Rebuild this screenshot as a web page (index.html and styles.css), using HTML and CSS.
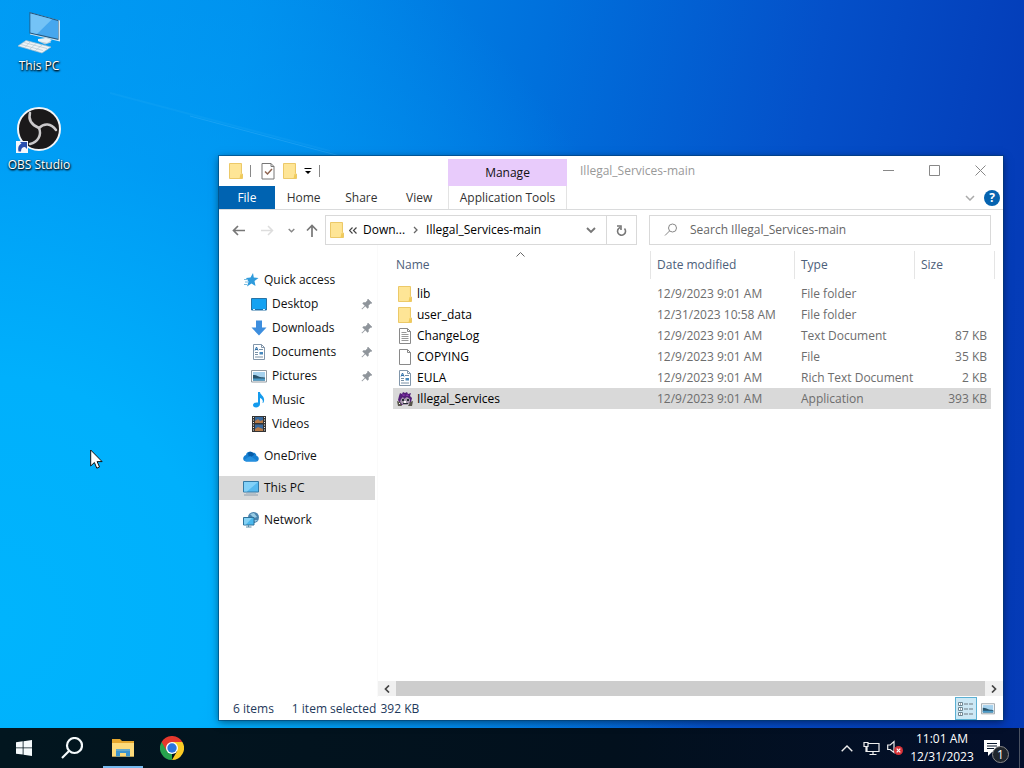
FILE: index.html
```html
<!DOCTYPE html>
<html lang="en">
<head>
<meta charset="utf-8">
<title>Illegal_Services-main</title>
<link rel="stylesheet" href="styles.css">
</head>
<body>
<svg class="defs" aria-hidden="true">
  <symbol id="folder" viewBox="0 0 14 16"><path d="M.5.500h12v10l1 .5v4.500H.500z" fill="#fde28a" stroke="#ecc968"/><path d="M1 1h10.500v14H1z" fill="#fee596"/><path d="M11.500 11l1.500.5v4h-2.500z" fill="#f0cb5a"/></symbol>
  <symbol id="pin" viewBox="0 0 12 12"><path d="M7 1l4 4-1 .6-.6-.1-2 2 .1 2-.9.9L4.300 8 1 11.200.800 11 4 7.700 1.600 5.400l.9-.9 2 .1 2-2-.1-.6z" fill="#8f959b" stroke="#8f959b" stroke-width=".5"/></symbol>
  <symbol id="doc" viewBox="0 0 14 16"><path d="M1.500.5h8l3 3v12h-11z" fill="#fff" stroke="#8296aa"/><path d="M9.500.5v3h3" fill="none" stroke="#8296aa"/><path d="M3 6.500l1.500-3.500L6 6.500M3.500 5.500h2" fill="none" stroke="#2c6ea8"/><path d="M7 5.500h4M3 8.500h3M3 10.500h3M3 13h8" stroke="#7890a5"/><path d="M7.500 8h3.500v2.500H7.500z" fill="#4788bd"/></symbol>
  <symbol id="picture" viewBox="0 0 16 13"><path d="M.5.500h15v11.500H.500z" fill="#fff" stroke="#929ba2"/><path d="M2 2h12v8.500H2z" fill="#a6d2ee"/><path d="M2 5c4 0 5 1.500 7 2 2 .5 4 .3 5 .6v2.900H2z" fill="#28536b"/><path d="M2 8.500h12v2H2z" fill="#4b9bc8"/></symbol>
  <symbol id="pc" viewBox="0 0 16 15"><path d="M.5.500h15v10.500H.5z" fill="#56b9ef" stroke="#3479a5"/><path d="M1 1h14L4 10.500H1z" fill="#83d1f8"/><path d="M1 14h14" stroke="#8c9cab"/><path d="M3 12.500h10" stroke="#b5c1ca"/></symbol>
</svg>

<main class="desktop">
  <svg class="rays" viewBox="0 0 400 160" aria-hidden="true"><path d="M190 116l150 40" stroke="#71ceff" stroke-opacity=".2"/><path d="M110 93l220 58" stroke="#71ceff" stroke-opacity=".07" stroke-width="2"/></svg>
  <nav class="shortcuts" aria-label="Desktop">
    <a href="#" class="shortcut">
      <svg width="46" height="44" viewBox="0 0 46 44"><path d="M14 2.500l30 8v21l-30-7z" fill="#d3e8f4"/><path d="M13.500 2l29 8v20l-29-6.500z" fill="#27597f"/><path d="M14.500 3.500l27.500 7.500v17.700l-27.500-6.200z" fill="#46a7ee"/><path d="M14.500 3.500L36 9.300 21 24l-6.500-1.500z" fill="#74c3f6"/><path d="M28 27l1 3-7 1 7 3.500 6-2-1-4z" fill="#b5cbd8"/><path d="M22 29l8-1 6 2-5 3-9-2z" fill="#eaf2f6"/><path d="M10 30.500l25 6.500-9 6-24-7z" fill="#eef3f6" stroke="#a4bdcd" stroke-width=".7"/><path d="M8 32.500l23 6M5 34.500l22 6M14 32l-5 5.500M20 33.500l-6 5.500M26 35l-7 6" stroke="#b4c7d3" stroke-width=".7"/></svg>
      <span>This PC</span>
    </a>
    <a href="#" class="shortcut">
      <svg width="46" height="48" viewBox="0 0 46 48"><circle cx="23" cy="23" r="21" fill="#1b191a" stroke="#f2f5f8" stroke-width="2"/><g fill="none" stroke="#cbc9cb" stroke-linecap="round"><path d="M23 22C16 19 12 14 14 7" stroke-width="2.500"/><path d="M23 22c5-5 12-5 17 2" stroke-width="2.500"/><path d="M23 22c3 7-1 14-9 16" stroke-width="2.500"/></g><path d="M0 35h12v12H0z" fill="#f5f8fc"/><path d="M2.500 45.500c-1-5 1-7 3-8L4 36h7v7l-2-2c-3 0-4 2-4 4.500z" fill="#2a4fae"/></svg>
      <span>OBS Studio</span>
    </a>
  </nav>

  <section class="window" aria-label="Illegal_Services-main">
    <header class="titlebar">
      <div class="quick">
        <svg width="14" height="16"><use href="#folder"/></svg><i class="bar"></i>
        <button aria-label="Properties" class="props"><svg width="14" height="17" viewBox="0 0 14 17"><path d="M1 .500h9l3 3v12.500H1z" fill="#fff" stroke="#777"/><path d="M10 .5v3h3" fill="none" stroke="#777"/><path d="M4 8.500l2.500 2.500L11 6" fill="none" stroke="#8e6450" stroke-width="1.500"/></svg></button>
        <button aria-label="New folder"><svg width="14" height="16"><use href="#folder"/></svg></button>
        <button aria-label="Customize toolbar"><svg width="8" height="8" viewBox="0 0 8 8"><path d="M.5 1.500h7" stroke="#000"/><path d="M1 4h6L4 7z"/></svg></button><i class="bar"></i>
      </div>
      <div class="manage">Manage</div>
      <h1>Illegal_Services-main</h1>
      <div class="controls">
        <button aria-label="Minimize"><svg width="11" height="11" viewBox="0 0 11 11"><path d="M0 5.500h11" stroke="#888"/></svg></button>
        <button aria-label="Maximize"><svg width="11" height="11" viewBox="0 0 11 11"><path d="M.5.500h10v10H.500z" fill="none" stroke="#888"/></svg></button>
        <button aria-label="Close"><svg width="11" height="11" viewBox="0 0 11 11"><path d="M.5.500l10 10M10.500.500l-10 10" stroke="#888"/></svg></button>
      </div>
    </header>

    <div class="ribbon">
      <div class="tabs"><button class="file">File</button><button>Home</button><button>Share</button><button>View</button></div>
      <button class="context">Application Tools</button>
      <div class="ribbon-end">
        <button aria-label="Expand ribbon"><svg width="10" height="6" viewBox="0 0 10 6"><path d="M1 1l4 4 4-4" fill="none" stroke="#aaa" stroke-width="1.500"/></svg></button>
        <button class="help" aria-label="Help">?</button>
      </div>
    </div>

    <div class="location">
      <div class="history">
        <button class="back" aria-label="Back"><svg width="13" height="11" viewBox="0 0 13 11"><path d="M13 5.500H1.500M6 1L1.500 5.500 6 10" fill="none" stroke="#777" stroke-width="1.700"/></svg></button>
        <button aria-label="Forward"><svg width="13" height="11" viewBox="0 0 13 11"><path d="M0 5.500h11.500M7 1l4.500 4.500L7 10" fill="none" stroke="#ddd" stroke-width="1.500"/></svg></button>
        <button aria-label="Recent locations"><svg width="7" height="5" viewBox="0 0 7 5"><path d="M.7 1l2.800 2.800L6.300 1" fill="none" stroke="#888" stroke-width="1.400"/></svg></button>
        <button class="up" aria-label="Up"><svg width="12" height="13" viewBox="0 0 12 13"><path d="M6 13V1.500M1 6.500l5-5 5 5" fill="none" stroke="#777" stroke-width="1.700"/></svg></button>
      </div>
      <div class="address">
        <svg width="14" height="16"><use href="#folder"/></svg>
        <svg class="more" width="8" height="7" viewBox="0 0 8 7"><path d="M3.500.500l-3 3 3 3M7.500.500l-3 3 3 3" fill="none" stroke="#444" stroke-width="1.200"/></svg>
        <button>Down...</button>
        <svg width="5" height="8" viewBox="0 0 5 8"><path d="M1 1l3 3-3 3" fill="none" stroke="#666" stroke-width="1.300"/></svg>
        <button>Illegal_Services-main</button>
        <button class="drop" aria-label="Previous locations"><svg width="10" height="7" viewBox="0 0 10 7"><path d="M1 1l4 4 4-4" fill="none" stroke="#777" stroke-width="1.900"/></svg></button>
        <button class="refresh" aria-label="Refresh"><svg width="11" height="13" viewBox="0 0 11 13"><path d="M8.500 4.500A4 4 0 1 1 4 3.500M1 2h4v4" fill="none" stroke="#777" stroke-width="1.600"/></svg></button>
      </div>
      <label class="search"><svg width="14" height="14" viewBox="0 0 14 14"><circle cx="8.500" cy="5" r="4" fill="none" stroke="#888"/><path d="M5.500 8L1 12.500" stroke="#888"/></svg><input type="search" aria-label="Search Illegal_Services-main" placeholder="Search Illegal_Services-main"></label>
    </div>

    <div class="body">
      <nav class="tree" aria-label="Folders">
        <a href="#" class="root"><svg width="16" height="14" viewBox="0 0 16 14"><path d="M10 0l.8 4.500 4.700.5-4 3 1 5-4-2.500L4 13.500l1.500-5L3 5l4.500-.5z" fill="#2f9bdc"/><path d="M1 6.500h4M2 9h4M1 11.500h3" stroke="#79bce0"/></svg>Quick access</a>
        <a href="#"><svg width="16" height="13" viewBox="0 0 16 13"><path d="M.5.500h15v11.500H.500z" fill="#14a2f2" stroke="#2873a5"/><path d="M1 11.500h14" stroke="#1470b0"/><path d="M2 11.500h2M12 11.500h2" stroke="#d5f0ff"/></svg>Desktop<svg class="pin" width="12" height="12"><use href="#pin"/></svg></a>
        <a href="#"><svg width="16" height="16" viewBox="0 0 16 16"><path d="M5 .500h6v7h4.500L8 15.500.500 7.500H5z" fill="#3d8ede"/></svg>Downloads<svg class="pin" width="12" height="12"><use href="#pin"/></svg></a>
        <a href="#"><svg width="16" height="16"><use href="#doc"/></svg>Documents<svg class="pin" width="12" height="12"><use href="#pin"/></svg></a>
        <a href="#"><svg width="16" height="13"><use href="#picture"/></svg>Pictures<svg class="pin" width="12" height="12"><use href="#pin"/></svg></a>
        <a href="#"><svg width="16" height="16" viewBox="0 0 16 16"><path d="M7 0h2c0 3 5 4 4 9-.5 2-1 2-1.500 2 1-3-.5-4-2.500-5v6c0 2-2 3.500-4 3.500S2 14.500 2 13s2-3 5-2.500z" fill="#159bed"/></svg>Music</a>
        <a href="#"><svg width="16" height="16" viewBox="0 0 16 16"><path d="M1 0h14v16H1z" fill="#343434"/><path d="M4 1h8v6H4zM4 8.500h8V15H4z" fill="#386a9f"/><path d="M4 5l3-2 2 2 3-1v3H4zM4 13l3-2 5 2v2H4z" fill="#b77b49"/><path d="M2.500 1v15M13.500 1v15" stroke="#eee" stroke-dasharray="1 1.500"/></svg>Videos</a>
        <a href="#" class="root spaced"><svg width="16" height="11" viewBox="0 0 16 11"><path d="M3 4C3.500 0 8 0 9.500 2c3-1 4 2 4 3 3 .5 3 5 0 5.500H3C-1 10-.5 5 3 4z" fill="#167fd1"/><path d="M5 2C8-1 11 2 11 4L6 7z" fill="#075da8"/><path d="M1 9l6-4 7 4.500-1 1H3z" fill="#2590df"/></svg>OneDrive</a>
        <a href="#" class="root spaced current"><svg width="16" height="15"><use href="#pc"/></svg>This PC</a>
        <a href="#" class="root spaced"><svg width="16" height="16" viewBox="0 0 16 16"><circle cx="10.500" cy="5.500" r="5.500" fill="#4a83ad"/><path d="M7 2l4-1 3 4-3 1zM11 8h4l-3 2z" fill="#98cbe4"/><path d="M.5 5.500h10.500v7.500H.500z" fill="#4cb9ee" stroke="#2e729b"/><path d="M1 6h8L3 12.500H1z" fill="#85d2f5"/><path d="M5.500 13v2M3 15h5.500" stroke="#5f8da7"/></svg>Network</a>
      </nav>

      <div class="content">
        <div class="list">
          <svg class="sort" width="9" height="5" viewBox="0 0 9 5"><path d="M.500 4.500l4-4 4 4" fill="none" stroke="#666"/></svg>
          <table>
            <colgroup><col><col class="c-date"><col class="c-type"><col class="c-size"></colgroup>
            <thead><tr><th><button>Name</button></th><th><button>Date modified</button></th><th><button>Type</button></th><th><button>Size</button></th></tr></thead>
            <tbody>
              <tr><td><span><svg width="16" height="16"><use href="#folder"/></svg>lib</span></td><td>12/9/2023 9:01 AM</td><td>File folder</td><td></td></tr>
              <tr><td><span><svg width="16" height="16"><use href="#folder"/></svg>user_data</span></td><td>12/31/2023 10:58 AM</td><td>File folder</td><td></td></tr>
              <tr><td><span><svg width="16" height="16" viewBox="0 0 14 16"><path d="M1.500.500h8l3 3v12h-11z" fill="#fff" stroke="#898989"/><path d="M9.500.500v3h3" fill="none" stroke="#898989"/><path d="M3.500 4.500h5M3.500 6.500h7M3.500 8.500h7M3.500 10.500h7M3.500 12.500h7" stroke="#999"/></svg>ChangeLog</span></td><td>12/9/2023 9:01 AM</td><td>Text Document</td><td>87 KB</td></tr>
              <tr><td><span><svg width="16" height="16" viewBox="0 0 14 16"><path d="M1.500.500h8l3 3v12h-11z" fill="#fff" stroke="#898989"/><path d="M9.500.500v3h3" fill="none" stroke="#898989"/></svg>COPYING</span></td><td>12/9/2023 9:01 AM</td><td>File</td><td>35 KB</td></tr>
              <tr><td><span><svg width="16" height="16"><use href="#doc"/></svg>EULA</span></td><td>12/9/2023 9:01 AM</td><td>Rich Text Document</td><td>2 KB</td></tr>
              <tr class="selected"><td><span><svg width="16" height="16" viewBox="0 0 16 16"><path d="M1 9l1-4 1-3 2 1 1-2 2 1 2-1 1 2 3-1-1 3 2 2-1 4-5 3H4z" fill="#542078"/><path d="M4 8l2-2 1 2 3-2 3 2v3l-3 3H6l-3-3z" fill="#a99bad"/><path d="M5 8h2v2H5zM10 8h2v2h-2zM6 12h5v1H6z" fill="#252c33"/><path d="M0 10l3 1 2 4H1zM13 11l3-1-1 5h-4z" fill="#57544b"/><path d="M5 3l4 1-3 1zM10 3l2 2H9z" fill="#8b35b2"/><path d="M7 10h2v2H7zM2 12h1v1H2z" fill="#fff"/></svg>Illegal_Services</span></td><td>12/9/2023 9:01 AM</td><td>Application</td><td>393 KB</td></tr>
            </tbody>
          </table>
        </div>
        <div class="scrollbar">
          <button aria-label="Scroll left"><svg width="6" height="8" viewBox="0 0 6 8"><path d="M5 .500L1.500 4 5 7.500" fill="none" stroke="#444" stroke-width="1.700"/></svg></button>
          <div class="thumb"></div>
          <button aria-label="Scroll right"><svg width="6" height="8" viewBox="0 0 6 8"><path d="M1 .500L4.500 4 1 7.500" fill="none" stroke="#444" stroke-width="1.700"/></svg></button>
        </div>
      </div>
    </div>

    <footer class="status">
      <span class="count">6 items</span><span class="chosen">1 item selected</span><span>392 KB</span>
      <div class="views">
        <button class="on" aria-label="Details"><svg width="16" height="14" viewBox="0 0 16 14"><path d="M.500.500h4v3h-4zM.500 5.500h4v3h-4zM.500 10.500h4v3h-4z" fill="#fff" stroke="#6e8792"/><path d="M2 2h1M2 7h1M2 12h1" stroke="#456"/><path d="M6 2h4M11 2h4M6 7h4M11 7h4M6 12h4M11 12h4" stroke="#6e7880"/></svg></button>
        <button aria-label="Large icons"><svg width="14" height="12"><use href="#picture"/></svg></button>
      </div>
    </footer>
  </section>

  <svg class="cursor" width="13" height="21" viewBox="0 0 13 21" aria-hidden="true"><path d="M.700 1v16l3.700-3.500 2.400 5.700 2.700-1.200-2.400-5.400h5z" fill="#fff" stroke="#111"/></svg>
</main>

<footer class="taskbar">
  <button class="start" aria-label="Start"><svg width="16" height="16" viewBox="0 0 16 16"><path d="M0 2.300L6.700 1.300v6.200H0zM7.500 1.200L16 0v7.500H7.500zM0 8.300h6.700v6.300L0 13.700zM7.500 8.300H16V16l-8.500-1.200z" fill="#f5fafc"/></svg></button>
  <button class="find" aria-label="Search"><svg width="22" height="22" viewBox="0 0 22 22"><circle cx="13.500" cy="8.500" r="7.500" fill="none" stroke="#f5fafc" stroke-width="2.200"/><path d="M8 14l-7 7" stroke="#f5fafc" stroke-width="2.200"/></svg></button>
  <button class="app running" aria-label="File Explorer"><svg width="22" height="18" viewBox="0 0 22 18"><path d="M0 0h8l2 2h12v15.500H0z" fill="#e5a72e"/><path d="M0 4h22v13.500H0z" fill="#fddb7b"/><path d="M4 10h14v7.500h-4V14H8v3.500H4z" fill="#3d95cd"/><path d="M4 10h14v2H4z" fill="#65a9c9"/></svg></button>
  <button class="app" aria-label="Google Chrome"><svg width="24" height="24" viewBox="0 0 24 24"><path d="M12 12v12A12 12 0 0 1 1.600 6z" fill="#27a34d"/><path d="M12 6h10.400A12 12 0 0 0 1.600 6l5.200 9z" fill="#e5382d"/><path d="M17.200 15L12 24A12 12 0 0 0 22.400 6H12z" fill="#fccb25"/><circle cx="12" cy="12" r="6" fill="#fff"/><circle cx="12" cy="12" r="4.700" fill="#2b75df"/></svg></button>
  <div class="tray">
    <button aria-label="Show hidden icons"><svg width="12" height="7" viewBox="0 0 12 7"><path d="M.700 6.300L6 1l5.300 5.300" fill="none" stroke="#eee" stroke-width="1.400"/></svg></button>
    <button aria-label="Network"><svg width="17" height="15" viewBox="0 0 17 15"><path d="M5 2.500h11v8H4V6M10 10.500v3M6.500 13.500h7M1 1.500h4v4H1zM3 5.500v5h2" fill="none" stroke="#eee" stroke-width="1.200"/></svg></button>
    <button aria-label="Volume muted"><svg width="16" height="16" viewBox="0 0 16 16"><path d="M.700 5h2.500L7 1.500v11L3.200 9.500H.700z" fill="none" stroke="#eee" stroke-width="1.200"/><circle cx="11.500" cy="10.500" r="4.500" fill="#d83238"/><path d="M9.700 8.700l3.600 3.600M13.300 8.700l-3.600 3.600" stroke="#fff" stroke-width="1.200"/></svg></button>
    <button class="clock"><span>11:01 AM</span><span>12/31/2023</span></button>
    <button class="notices" aria-label="Notifications"><svg width="16" height="16" viewBox="0 0 16 16"><path d="M0 0h16v12h-8l-4 4v-4H0z" fill="#fff"/><path d="M3 3.500h10M3 6h10M3 8.500h7" stroke="#08172b"/></svg><span class="badge">1</span></button>
    <button class="peek" aria-label="Show desktop"></button>
  </div>
</footer>
</body>
</html>
```
FILE: styles.css
```css
* { box-sizing: border-box; }
body { margin: 0; height: 100vh; display: flex; flex-direction: column; overflow: hidden; font: 12px/16px "Open Sans", "Noto Sans", sans-serif; color: #111; }
button { border: 0; margin: 0; padding: 0; background: none; font: inherit; color: inherit; display: flex; align-items: center; justify-content: center; }
a { color: inherit; text-decoration: none; }
svg { flex: none; display: block; }
.defs { position: absolute; width: 0; height: 0; }

.desktop { position: relative; flex: 1; min-height: 0;
  background: radial-gradient(ellipse 70% 110% at 0 85%, #00b4fd 0, #00b0fc 30%, rgba(0, 162, 248, .6) 60%, rgba(0, 140, 240, 0) 100%), linear-gradient(100deg, #0098f2 0, #008eec 22%, #0070dc 48%, #0450c9 72%, #043cb8 92%, #043ab6 100%); }
.rays { position: absolute; left: 0; top: 0; width: 400px; height: 160px; }
.shortcuts { display: flex; flex-direction: column; width: 78px; padding-top: 10px; gap: 32px; }
.shortcut { display: flex; flex-direction: column; align-items: center; gap: 4px; color: #fff; text-shadow: 1px 1px 2px #000, 0 1px 2px #000; }
.shortcut + .shortcut { gap: 3px; }
.cursor { position: absolute; left: 90px; top: 449px; }

.window { position: absolute; left: 219px; right: 21px; top: 156px; bottom: 8px; display: flex; flex-direction: column; background: #fff; box-shadow: 0 0 0 1px rgba(0, 60, 110, .55), 0 2px 8px rgba(0, 0, 0, .5); }
.titlebar { display: flex; height: 30px; flex: none; }
.quick { width: 229px; display: flex; align-items: center; padding-left: 10px; gap: 7px; }
.bar { width: 1px; height: 12px; background: #888; }
.props { margin-left: 3px; }
.props + button { margin-left: 1px; }
.manage { width: 119px; margin-top: 3px; background: #e8cbfb; display: flex; align-items: center; justify-content: center; }
h1 { margin: 0 auto 0 13px; font-size: 12px; font-weight: 400; line-height: 30px; color: #999; }
.controls { display: flex; }
.controls button { width: 46px; height: 28px; }

.ribbon { display: flex; flex: none; height: 24px; border-bottom: 1px solid #dadbdc; color: #333; }
.tabs { width: 229px; display: flex; }
.tabs button { width: 58px; }
.tabs .file { width: 56px; background: #0063b1; color: #fff; }
.context { width: 119px; border: 1px solid #e3e3e3; border-width: 0 1px; }
.ribbon-end { margin-left: auto; display: flex; align-items: center; gap: 9px; padding-right: 3px; }
.help { width: 16px; height: 16px; border-radius: 50%; background: #0563b0; color: #fff; font-weight: 700; }

.location { display: flex; flex: none; padding: 5px 12px 0 7px; }
.history { display: flex; flex: none; margin-right: 4px; }
.history button { width: 24px; }
.history .back { margin-right: 5px; }
.history .up { width: 18px; }
.address, .search { height: 30px; border: 1px solid #d9d9d9; display: flex; align-items: center; min-width: 0; }
.address { flex: 1 1 312px; margin-right: 12px; padding-left: 4px; color: #000; }
.more { margin: 0 6px 0 5px; }
.address button + svg { margin: 0 8px; }
.address .drop { width: 30px; margin-left: auto; }
.address .refresh { width: 30px; align-self: stretch; border-left: 1px solid #d9d9d9; }
.search { flex: 1 1 342px; padding-left: 14px; gap: 12px; }
.search input { flex: 1; min-width: 0; border: 0; outline: 0; padding: 0; font: inherit; background: none; }
.search input::placeholder { color: #666; opacity: 1; }

.body { flex: 1; min-height: 0; display: flex; }
.tree { width: 159px; flex: none; padding: 23px 2px 0 0; border-right: 1px solid #fafafa; }
.tree a { display: flex; align-items: center; gap: 5px; height: 24px; padding-left: 32px; }
.tree .root { padding-left: 24px; }
.tree .spaced { margin-top: 8px; }
.tree .current { background: #d9d9d9; }
.tree .pin { margin: 0 2px 0 auto; }
.content { flex: 1; min-width: 0; display: flex; flex-direction: column; }
.list { position: relative; flex: 1; padding: 6px 8px 0 15px; }
.sort { position: absolute; left: 138px; top: 7px; }
table { width: 100%; border-collapse: collapse; table-layout: fixed; color: #6d6d6d; }
.c-date { width: 144px; }
.c-type { width: 120px; }
.c-size { width: 80px; }
th { padding: 0 0 4px; font-weight: 400; }
th button { width: 100%; height: 28px; padding-left: 6px; justify-content: flex-start; border-right: 1px solid #e5e5e5; color: #4c607a; }
th:first-child button { padding-left: 3px; }
td { height: 21px; padding: 0 0 0 6px; white-space: nowrap; }
td:first-child { color: #000; padding-left: 4px; }
td:last-child { text-align: right; padding-right: 8px; }
td span { display: flex; align-items: center; gap: 4px; }
.selected td { background: #d9d9d9; }
.selected td:last-child { background: linear-gradient(#d9d9d9, #d9d9d9) no-repeat; background-size: calc(100% - 4px) 100%; }
.scrollbar { display: flex; height: 15px; flex: none; margin-bottom: 1px; background: #f0f0f0; }
.scrollbar button { width: 18px; }
.thumb { flex: 1; background: #cdcdcd; }
.status { display: flex; align-items: center; flex: none; height: 23px; padding-left: 14px; color: #1e395b; }
.count { margin-right: 18px; }
.chosen { margin-right: 4px; }
.views { margin-left: auto; display: flex; align-self: stretch; padding-right: 4px; }
.views button { width: 22px; }
.views .on { background: #cce8f5; border: 1px solid #5bb0d3; }

.taskbar { height: 40px; flex: none; display: flex; background: linear-gradient(90deg, #02161f, #02101d 60%, #030f2b); color: #fff; }
.start, .find { width: 48px; }
.find { margin-right: 7px; }
.app { width: 40px; margin-right: 9px; }
.running { border-bottom: 2px solid #76b9ed; padding-top: 2px; }
.tray { margin-left: auto; display: flex; }
.tray button { width: 24px; }
.tray .clock { width: 70px; flex-direction: column; line-height: 18px; }
.tray .notices { width: 42px; position: relative; padding-right: 12px; }
.badge { position: absolute; left: 15px; top: 18px; width: 17px; height: 17px; border: 1px solid #888; border-radius: 50%; background: #20262d; line-height: 15px; }
.tray .peek { width: 5px; border-left: 1px solid #4a5262; }
```
